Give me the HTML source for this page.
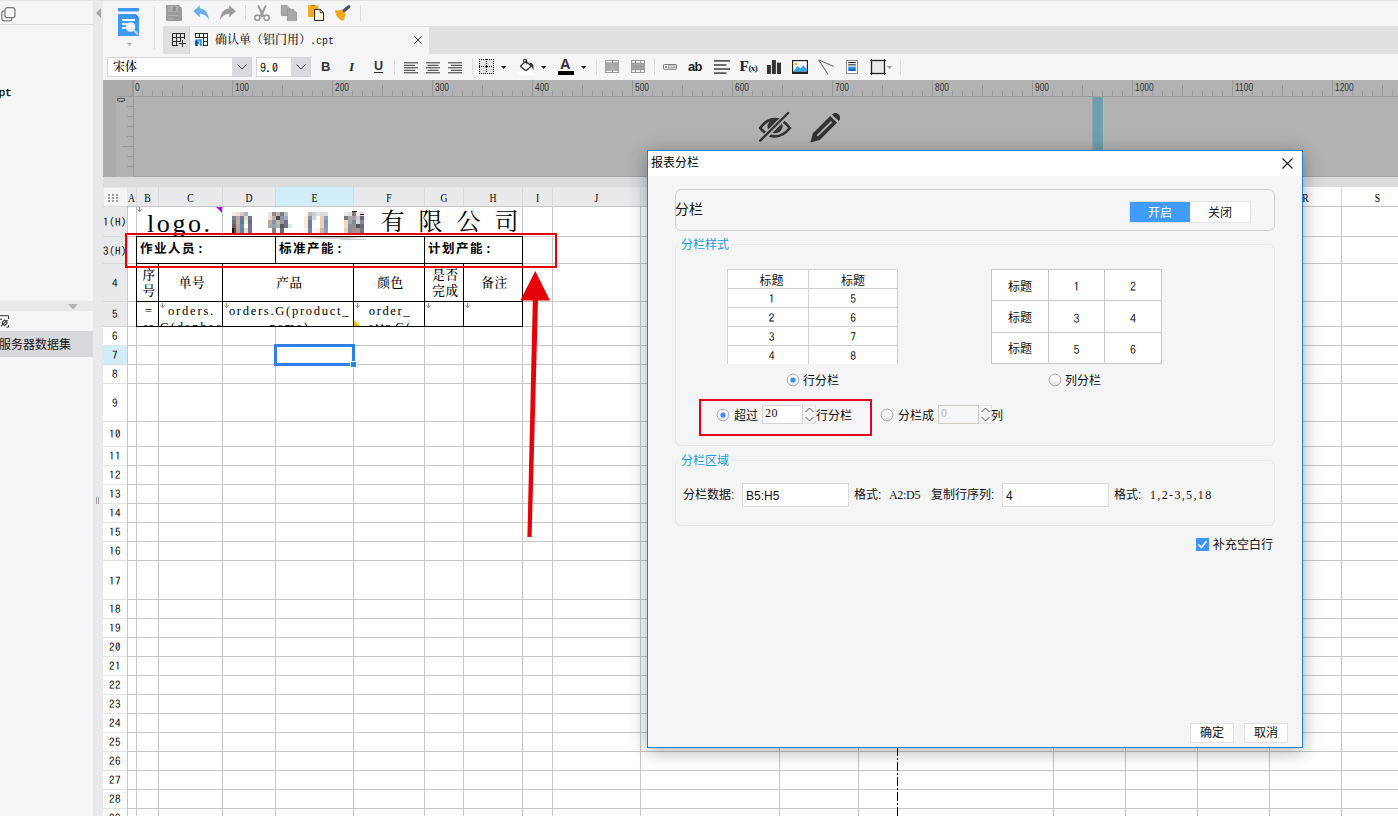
<!DOCTYPE html><html lang="zh"><head><meta charset="utf-8"><title>报表分栏</title><style>
*{box-sizing:border-box;margin:0;padding:0}
html,body{width:1398px;height:816px;overflow:hidden;background:#f5f5f7}
body{position:relative;font-family:"Liberation Sans","Noto Sans CJK SC",sans-serif;font-size:12px;color:#1a1a1a}
.a{position:absolute}
.ui{font-family:"Liberation Sans","Noto Sans CJK SC",sans-serif}
.song{font-family:"Liberation Mono","Noto Serif CJK SC",serif;font-weight:500}
.hl{position:absolute;height:1px;background:#c6c6c6}
.vl{position:absolute;width:1px;background:#c6c6c6}
.bl{position:absolute;background:#000}
.rh{position:absolute;left:103px;width:24px;text-align:center;font-family:"IPAGothic","Liberation Mono",monospace;font-size:11px;color:#000;letter-spacing:0.5px;white-space:nowrap}
.ch{position:absolute;top:187px;height:19px;line-height:22px;text-align:center;font-family:"Liberation Serif","Noto Serif CJK SC",serif;font-size:11.5px;color:#000;transform:scaleX(0.84)}
.cell{position:absolute;overflow:hidden;font-family:"Liberation Mono","Noto Serif CJK SC",serif;color:#000;text-align:center}
.sep{position:absolute;width:1px;background:#dcdcde}
.ns{font-family:"Liberation Serif","Noto Serif CJK SC",serif}
.ipa{font-family:"IPAGothic","Liberation Mono",monospace}
.lm{font-family:"Liberation Mono",monospace}
.ls{font-family:"Liberation Sans",sans-serif}
.lr{font-family:"Liberation Serif",serif}
svg{position:absolute;overflow:visible}
</style></head><body>
<div class="a" style="left:0;top:0;width:93px;height:816px;background:#f5f5f7"></div>
<div class="a" style="left:0;top:0;width:1398px;height:1px;background:#e4e4e6"></div>
<div class="a" style="left:0;top:24px;width:93px;height:1px;background:#d9d9db"></div>
<svg style="left:0;top:6px" width="17" height="17" viewBox="0 0 17 17"><rect x="1.8" y="4.8" width="10" height="10" rx="2.4" fill="#f5f5f7" stroke="#7c7c7c" stroke-width="1.3"/><rect x="4.9" y="1.7" width="10" height="10" rx="2.4" fill="#f5f5f7" stroke="#7c7c7c" stroke-width="1.3"/></svg>
<div class="a lm" style="left:-1.5px;top:85px;font-size:11.5px;line-height:16px;color:#000;letter-spacing:-0.5px;-webkit-text-stroke:0.25px #000">pt</div>
<div class="a" style="left:0;top:301px;width:93px;height:10px;background:#e9e9eb"></div>
<svg style="left:68px;top:304px" width="10" height="6"><path d="M0 0H10L5 5.5Z" fill="#b4b4b6"/></svg>
<svg style="left:0;top:315px" width="10" height="14" viewBox="0 0 10 14"><path d="M0 0.7H8.5V4M8.5 10V12.2H6.5M0 4.2H2" fill="none" stroke="#333" stroke-width="1"/><path d="M1 11.2L7.6 5.2" fill="none" stroke="#333" stroke-width="1.1"/><rect x="2.6" y="5.6" width="4.2" height="4.2" rx="1.3" transform="rotate(45 4.7 7.7)" fill="none" stroke="#333" stroke-width="1.1"/></svg>
<div class="a" style="left:0;top:331px;width:93px;height:26px;background:#d9d9dd"></div>
<div class="a ui" style="left:-1px;top:331px;height:26px;line-height:28px;font-size:12px;color:#111;white-space:nowrap">服务器数据集</div>
<div class="a" style="left:93px;top:1px;width:10px;height:815px;background:#e9e9eb"></div>
<svg style="left:96px;top:8px" width="6" height="11"><path d="M5 0V10L0 5Z" fill="#a6a6a8"/></svg>
<div class="a" style="left:96px;top:497px;width:1px;height:7px;background:#a0a0a0"></div><div class="a" style="left:98px;top:497px;width:1px;height:7px;background:#a0a0a0"></div>
<div class="a" style="left:163px;top:26px;width:1235px;height:28px;background:#e0e0e2"></div>
<div class="a" style="left:190px;top:27px;width:239px;height:27px;background:#f5f5f7"></div>
<div class="a" style="left:189px;top:27px;width:1px;height:27px;background:#d4d4d6"></div>
<div class="a song" style="left:215px;top:26px;height:28px;line-height:31px;font-size:12px;color:#222;white-space:nowrap"><span>确认单（铝门用）</span><span style="font-size:10px;font-family:'Liberation Mono',monospace;margin-left:-1px">.cpt</span></div>
<div class="sep" style="left:154px;top:7px;height:42px"></div>
<div class="sep" style="left:245px;top:5px;height:16px"></div>
<div class="sep" style="left:360px;top:5px;height:16px"></div>
<div class="sep" style="left:394px;top:59px;height:16px"></div>
<div class="sep" style="left:472px;top:59px;height:16px"></div>
<div class="sep" style="left:596px;top:59px;height:16px"></div>
<div class="sep" style="left:654px;top:59px;height:16px"></div>
<div class="sep" style="left:900px;top:59px;height:16px"></div>
<svg style="left:118px;top:8px" width="21" height="28" viewBox="0 0 21 28"><path d="M0 0H21V2.5Q21 3.6 19.8 3.6H1.2Q0 3.6 0 2.5Z" fill="#3f97f6"/><path d="M1 6H17.5L21 9.5V28H0V7Q0 6 1 6Z" fill="#3f97f6"/><path d="M17.5 6L21 9.5H17.5Z" fill="#2b7bd8"/><rect x="4" y="11" width="13" height="2" fill="#fff"/><rect x="4" y="15.2" width="5" height="1.8" fill="#fff"/><rect x="4" y="19" width="4" height="1.8" fill="#fff"/><circle cx="12.5" cy="19" r="4.3" fill="#e4f1fd" stroke="#f4f4f4" stroke-width="1.1"/><rect x="8.8" y="17.3" width="7.4" height="1.6" fill="#fff" opacity="0.9"/><path d="M15.8 22.3L19.6 26" stroke="#e8e8e8" stroke-width="1.8" stroke-linecap="round"/><path d="M16.6 23.1L19.6 26" stroke="#9aa0a8" stroke-width="0.8" stroke-linecap="round"/></svg>
<svg style="left:126.5px;top:43px" width="5" height="3" viewBox="0 0 5 3"><path d="M0 0H5L2.5 3Z" fill="#a8a8a8"/></svg>
<svg style="left:166px;top:5px" width="16" height="16" viewBox="0 0 16 16"><path d="M1 0H12.8L16 3.2V15Q16 16 15 16H1Q0 16 0 15V1Q0 0 1 0Z" fill="#9b9b9b"/><rect x="2" y="1" width="10" height="6" fill="#adadad"/><rect x="7" y="1.8" width="2.8" height="4.2" fill="#8e8e8e"/><rect x="2" y="10" width="9.6" height="1" fill="#b2b2b2"/><rect x="2" y="13.2" width="6.8" height="1" fill="#b2b2b2"/></svg>
<svg style="left:193px;top:5px" width="16" height="16" viewBox="0 0 16 16"><path d="M0.2 6.2L6.8 0.2V3.4C12 3.6 15.6 7.4 16 15.2C13.4 10.6 11 9 6.8 8.8V12.2Z" fill="#6eb0ef"/></svg>
<svg style="left:220px;top:5px" width="16" height="16" viewBox="0 0 16 16"><path d="M15.8 6.2L9.2 0.2V3.4C4 3.6 0.4 7.4 0 15.2C2.6 10.6 5 9 9.2 8.8V12.2Z" fill="#9c9c9c"/></svg>
<svg style="left:254px;top:5px" width="16" height="16" viewBox="0 0 16 16"><path d="M3.2 0.2C4.6 0 5.4 0.6 5.8 1.6L10.2 10.8L8.2 12.4Z" fill="#9a9a9a"/><path d="M12.8 0.2C11.4 0 10.6 0.6 10.2 1.6L5.8 10.8L7.8 12.4Z" fill="#9a9a9a"/><circle cx="3.4" cy="12.7" r="2.6" fill="none" stroke="#9a9a9a" stroke-width="1.6"/><circle cx="12.6" cy="12.7" r="2.6" fill="none" stroke="#9a9a9a" stroke-width="1.6"/></svg>
<svg style="left:281px;top:5px" width="16" height="16" viewBox="0 0 16 16"><path d="M0.4 0.4H5.8L8.8 3.4V10.6H0.4Z" fill="#a8a8a8" stroke="#929292" stroke-width="0.8"/><path d="M5.8 0.4V3.4H8.8" fill="#bdbdbd" stroke="#929292" stroke-width="0.6"/><path d="M6.4 4.4H12.4L15.6 7.6V15.6H6.4Z" fill="#a8a8a8" stroke="#929292" stroke-width="0.8"/><path d="M12.4 4.4V7.6H15.6" fill="#bdbdbd" stroke="#929292" stroke-width="0.6"/></svg>
<svg style="left:308px;top:5px" width="16" height="16" viewBox="0 0 16 16"><rect x="0" y="0.3" width="10" height="11.7" fill="#f2aa1c"/><rect x="3" y="0" width="4" height="1" fill="#c4562c"/><path d="M6.6 4.4H12.4L15.5 7.5V15.5H6.6Z" fill="#fff3dd" stroke="#222" stroke-width="1"/><path d="M12.2 4.6V7.7H15.3" fill="none" stroke="#222" stroke-width="0.9"/></svg>
<svg style="left:335px;top:5px" width="16" height="16" viewBox="0 0 16 16"><path d="M0 5.2C3.6 5.6 6.6 5.2 8 4.6L10.6 8.8C10.2 11.4 9.6 14 8.2 15.8C3.6 15 0.6 10.6 0 5.2Z" fill="#f2aa1c"/><path d="M8.3 5L10.4 8.2" stroke="#e8e8ea" stroke-width="1" fill="none"/><path d="M9.2 5.6L13.8 1.8" stroke="#4c5262" stroke-width="3.2" stroke-linecap="round"/></svg>
<svg style="left:172px;top:33px" width="14" height="14" viewBox="0 0 14 14"><path d="M0 0.5H13 M0 4.5H13 M0 8.5H8 M0 12.5H6 M0.5 0V13 M4.5 0V13 M8.5 0V8.5 M12.5 0V5.5" fill="none" stroke="#2a2a2a" stroke-width="1" shape-rendering="crispEdges"/><path d="M7 10.5H14 M10.5 7.4V13.8" fill="none" stroke="#2a2a2a" stroke-width="1" shape-rendering="crispEdges"/></svg>
<svg style="left:195px;top:33px" width="13" height="14" viewBox="0 0 13 14"><path d="M0 0.5H13 M0 4.5H13 M8 8.5H13 M8 12.5H13 M0.5 0V5 M4.5 0V5 M8.5 0V13 M12.5 0V13" fill="none" stroke="#2a2a2a" stroke-width="1" shape-rendering="crispEdges"/><path d="M0.6 6.4H2.6V8.8H4.2V10.6H2.6V13H0.2C0 10.6 0 8.6 0.6 6.4Z" fill="#0c4fa6"/><path d="M3.2 6.2H6.8V13H4.8V8.2H3.2Z" fill="#22a0e2"/></svg>
<svg style="left:414px;top:36px" width="8" height="8" viewBox="0 0 8 8"><path d="M0.3 0.3L7.7 7.7M7.7 0.3L0.3 7.7" stroke="#333" stroke-width="1" fill="none"/></svg>
<div class="a" style="left:321px;top:57px;height:20px;line-height:20px;font:bold 13px/20px 'Liberation Sans',sans-serif;color:#333">B</div>
<div class="a" style="left:349px;top:57px;height:20px;font:italic bold 13.5px/20px 'Liberation Serif',serif;color:#333">I</div>
<div class="a" style="left:374px;top:57px;height:20px;font:bold 12.5px/19px 'Liberation Sans',sans-serif;color:#333">U</div>
<div class="a" style="left:374px;top:71.5px;width:9px;height:1px;background:#333"></div>
<svg style="left:404px;top:61.7px" width="14" height="12" viewBox="0 0 14 12"><rect x="0" y="0.3" width="14" height="1" fill="#333"/><rect x="0" y="2.8" width="11" height="1" fill="#333"/><rect x="0" y="5.3" width="14" height="1" fill="#333"/><rect x="0" y="7.8" width="11" height="1" fill="#333"/><rect x="0" y="10.3" width="14" height="1" fill="#333"/></svg>
<svg style="left:426px;top:61.7px" width="14" height="12" viewBox="0 0 14 12"><rect x="0" y="0.3" width="14" height="1" fill="#333"/><rect x="1.5" y="2.8" width="11" height="1" fill="#333"/><rect x="0" y="5.3" width="14" height="1" fill="#333"/><rect x="1.5" y="7.8" width="11" height="1" fill="#333"/><rect x="0" y="10.3" width="14" height="1" fill="#333"/></svg>
<svg style="left:448px;top:61.7px" width="14" height="12" viewBox="0 0 14 12"><rect x="0" y="0.3" width="14" height="1" fill="#333"/><rect x="3" y="2.8" width="11" height="1" fill="#333"/><rect x="0" y="5.3" width="14" height="1" fill="#333"/><rect x="3" y="7.8" width="11" height="1" fill="#333"/><rect x="0" y="10.3" width="14" height="1" fill="#333"/></svg>
<svg style="left:479px;top:59px" width="15" height="15" viewBox="0 0 15 15"><rect x="0" y="0" width="15" height="15" fill="#e3e3e5"/><g fill="#111" shape-rendering="crispEdges"><rect x="0" y="0" width="1" height="1"/><rect x="0" y="14" width="1" height="1"/><rect x="0" y="0" width="1" height="1"/><rect x="14" y="0" width="1" height="1"/><rect x="2" y="0" width="1" height="1"/><rect x="2" y="14" width="1" height="1"/><rect x="0" y="2" width="1" height="1"/><rect x="14" y="2" width="1" height="1"/><rect x="2" y="7" width="1" height="1"/><rect x="7" y="2" width="1" height="1"/><rect x="4" y="0" width="1" height="1"/><rect x="4" y="14" width="1" height="1"/><rect x="0" y="4" width="1" height="1"/><rect x="14" y="4" width="1" height="1"/><rect x="4" y="7" width="1" height="1"/><rect x="7" y="4" width="1" height="1"/><rect x="6" y="0" width="1" height="1"/><rect x="6" y="14" width="1" height="1"/><rect x="0" y="6" width="1" height="1"/><rect x="14" y="6" width="1" height="1"/><rect x="6" y="7" width="1" height="1"/><rect x="7" y="6" width="1" height="1"/><rect x="8" y="0" width="1" height="1"/><rect x="8" y="14" width="1" height="1"/><rect x="0" y="8" width="1" height="1"/><rect x="14" y="8" width="1" height="1"/><rect x="8" y="7" width="1" height="1"/><rect x="7" y="8" width="1" height="1"/><rect x="10" y="0" width="1" height="1"/><rect x="10" y="14" width="1" height="1"/><rect x="0" y="10" width="1" height="1"/><rect x="14" y="10" width="1" height="1"/><rect x="10" y="7" width="1" height="1"/><rect x="7" y="10" width="1" height="1"/><rect x="12" y="0" width="1" height="1"/><rect x="12" y="14" width="1" height="1"/><rect x="0" y="12" width="1" height="1"/><rect x="14" y="12" width="1" height="1"/><rect x="12" y="7" width="1" height="1"/><rect x="7" y="12" width="1" height="1"/><rect x="14" y="0" width="1" height="1"/><rect x="14" y="14" width="1" height="1"/><rect x="0" y="14" width="1" height="1"/><rect x="14" y="14" width="1" height="1"/><rect x="6" y="7" width="3" height="1"/><rect x="7" y="6" width="1" height="3"/><rect x="0" y="6" width="1" height="3"/><rect x="6" y="0" width="3" height="1"/></g></svg>
<svg style="left:500.7px;top:66px" width="5.4" height="3" viewBox="0 0 5.4 3"><path d="M0 0H5.4L2.7 3Z" fill="#222"/></svg>
<svg style="left:540.7px;top:66px" width="5.4" height="3" viewBox="0 0 5.4 3"><path d="M0 0H5.4L2.7 3Z" fill="#222"/></svg>
<svg style="left:580.7px;top:66px" width="5.4" height="3" viewBox="0 0 5.4 3"><path d="M0 0H5.4L2.7 3Z" fill="#222"/></svg>
<svg style="left:519px;top:58px" width="16" height="14" viewBox="0 0 16 14"><path d="M4.6 1.4H7.6V6" fill="none" stroke="#333" stroke-width="1"/><path d="M4.6 1.4V4" fill="none" stroke="#333" stroke-width="1"/><path d="M6.6 3.2L12.4 8L7 12.8L1.4 8.2Z" fill="#f5f5f7" stroke="#333" stroke-width="1.2" stroke-linejoin="round"/><path d="M7.6 3.4V6.4" fill="none" stroke="#333" stroke-width="1"/><path d="M10.2 4.4C13.4 4.6 15.4 7 14.2 12.4C13.6 9.8 12.8 8.6 11.8 8.2Z" fill="#333"/></svg>
<div class="a" style="left:518px;top:71px;width:16px;height:4px;background:#fff"></div>
<div class="a" style="left:560px;top:55px;font:bold 14.5px/18px 'Liberation Sans',sans-serif;color:#333">A</div>
<div class="a" style="left:558px;top:71px;width:16px;height:4px;background:#000"></div>
<svg style="left:605px;top:60px" width="14" height="13" viewBox="0 0 14 13"><rect x="0" y="0" width="14" height="13" fill="#9a9a9a"/><rect x="1" y="3" width="12" height="7" fill="#a8a8a8"/><rect x="1" y="1" width="6" height="1.3" fill="#f3f3f5"/><rect x="8" y="1" width="5" height="1.3" fill="#f3f3f5"/><rect x="1" y="10.7" width="6" height="1.3" fill="#f3f3f5"/><rect x="8" y="10.7" width="5" height="1.3" fill="#f3f3f5"/><text x="7" y="8.8" font-family="Liberation Sans,sans-serif" font-size="6.5" fill="#bdbdbd" text-anchor="middle">a</text></svg>
<svg style="left:631px;top:60px" width="14" height="13" viewBox="0 0 14 13"><rect x="0" y="0" width="14" height="13" fill="#9a9a9a"/><rect x="1" y="1" width="3" height="1.8" fill="#f3f3f5"/><rect x="5" y="1" width="4" height="1.8" fill="#f3f3f5"/><rect x="10" y="1" width="3" height="1.8" fill="#f3f3f5"/><rect x="1" y="3.8" width="3" height="2.3" fill="#a6a6a6"/><rect x="5" y="3.8" width="4" height="2.3" fill="#a6a6a6"/><rect x="10" y="3.8" width="3" height="2.3" fill="#a6a6a6"/><rect x="1" y="7" width="3" height="2.3" fill="#a6a6a6"/><rect x="5" y="7" width="4" height="2.3" fill="#a6a6a6"/><rect x="10" y="7" width="3" height="2.3" fill="#a6a6a6"/><rect x="1" y="10.2" width="3" height="1.8" fill="#f3f3f5"/><rect x="5" y="10.2" width="4" height="1.8" fill="#f3f3f5"/><rect x="10" y="10.2" width="3" height="1.8" fill="#f3f3f5"/></svg>
<svg style="left:663px;top:64px" width="14" height="6" viewBox="0 0 14 6"><rect x="0.5" y="0.5" width="13" height="4.8" rx="0.6" fill="#f5f5f7" stroke="#808080" stroke-width="1"/><rect x="2.1" y="2" width="1.8" height="1.8" fill="#808080"/><rect x="5.4" y="1.9" width="6.6" height="2" fill="#eee" stroke="#808080" stroke-width="0.7"/></svg>
<div class="a" style="left:688px;top:57px;font:bold 13px/20px 'Liberation Sans',sans-serif;color:#1c1c1c;letter-spacing:-0.7px">ab</div>
<svg style="left:714px;top:60px" width="16" height="14" viewBox="0 0 16 14"><rect x="0" y="0.2" width="16" height="1.4" fill="#333"/><rect x="0" y="4.3" width="12.4" height="1.4" fill="#333"/><rect x="0" y="8.3" width="16" height="1.4" fill="#333"/><rect x="0" y="12.4" width="12.4" height="1.4" fill="#333"/></svg>
<div class="a lr" style="left:739.5px;top:56px;font-weight:bold;font-size:15.5px;line-height:20px;color:#222;white-space:nowrap">F<span style="font-size:9px;font-weight:bold;letter-spacing:-0.5px;position:relative;top:-0.3px;left:-0.6px">(x)</span></div>
<svg style="left:767px;top:60px" width="14" height="14" viewBox="0 0 14 14"><rect x="0" y="5" width="3.9" height="9" fill="#333"/><rect x="4.9" y="0" width="4" height="14" fill="#333"/><rect x="9.9" y="2.6" width="4.1" height="11.4" fill="#333"/></svg>
<svg style="left:792px;top:60px" width="16" height="14" viewBox="0 0 16 14"><rect x="0.6" y="0.6" width="14.8" height="12.8" fill="#fff" stroke="#222" stroke-width="1.2"/><rect x="0" y="11.4" width="16" height="2.6" fill="#222"/><path d="M1.2 11.4L5.6 5.8L8.4 8.6L11.2 5.2L14.8 9V11.4Z" fill="#35a7ea"/><circle cx="3.8" cy="3.8" r="1.4" fill="#f7b52c"/></svg>
<svg style="left:818px;top:59px" width="16" height="16" viewBox="0 0 16 16"><path d="M0.5 0.8L15.8 7.6M0.5 0.8L10 15.4" stroke="#777" stroke-width="1.1" fill="none"/></svg>
<svg style="left:846px;top:60px" width="12" height="14" viewBox="0 0 12 14"><rect x="0.5" y="0.5" width="11" height="13" fill="#fff" stroke="#8a8a8a" stroke-width="1"/><rect x="2.2" y="2" width="7.6" height="1.1" fill="#222"/><rect x="2.2" y="4.3" width="7.6" height="1.1" fill="#222"/><rect x="2.2" y="6.6" width="7.6" height="4.4" fill="#2f8fe6"/><path d="M2.4 11L5 8.4L6.6 9.8L8 8.6L9.6 10V11Z" fill="#1b5fb8"/></svg>
<svg style="left:870px;top:59px" width="16" height="16" viewBox="0 0 16 16"><rect x="1.5" y="1.5" width="13" height="13" fill="#e9e9eb" stroke="#222" stroke-width="1.3"/><path d="M0 1.5H16M0 14.5H16M1.5 0V16M14.5 0V16" stroke="#222" stroke-width="1" fill="none"/></svg>
<svg style="left:887px;top:65.5px" width="5" height="3" viewBox="0 0 5 3"><path d="M0 0H5L2.5 3Z" fill="#999"/></svg>
<div class="a" style="left:107px;top:57px;width:145px;height:20px;background:#fff;border:1px solid #d4d4d6"></div>
<div class="a" style="left:232px;top:58px;width:19px;height:18px;background:#d9d9dd"></div>
<svg style="left:237px;top:64px" width="10" height="6"><path d="M0.5 0.5L5 5L9.5 0.5" fill="none" stroke="#444" stroke-width="1"/></svg>
<div class="a song" style="left:113px;top:57px;height:20px;line-height:23px;font-size:12px;color:#000">宋体</div>
<div class="a" style="left:256px;top:57px;width:55px;height:20px;background:#fff;border:1px solid #d4d4d6"></div>
<div class="a" style="left:291px;top:58px;width:19px;height:18px;background:#d9d9dd"></div>
<svg style="left:296px;top:64px" width="10" height="6"><path d="M0.5 0.5L5 5L9.5 0.5" fill="none" stroke="#444" stroke-width="1"/></svg>
<div class="a ipa" style="left:260px;top:57px;height:20px;line-height:20px;font-size:12px;color:#000;letter-spacing:0">9.0</div>
<div class="a" style="left:103px;top:80px;width:1295px;height:97px;background:#b2b2b2"></div>
<div class="a" style="left:103px;top:80px;width:30px;height:16px;background:#ababab"></div>
<div class="a" style="left:103px;top:96px;width:13px;height:81px;background:#ababab"></div>
<div class="a" style="left:116px;top:96px;width:1282px;height:1px;background:#9c9c9c"></div>
<div class="a" style="left:133px;top:80px;width:1px;height:97px;background:#9c9c9c"></div>
<div class="a" style="left:132px;top:80px;width:1px;height:16px;background:#9a9a9a"></div><div class="a" style="left:142px;top:91px;width:1px;height:5px;background:#9a9a9a"></div><div class="a" style="left:152px;top:91px;width:1px;height:5px;background:#9a9a9a"></div><div class="a" style="left:162px;top:91px;width:1px;height:5px;background:#9a9a9a"></div><div class="a" style="left:172px;top:91px;width:1px;height:5px;background:#9a9a9a"></div><div class="a" style="left:182px;top:85px;width:1px;height:11px;background:#9a9a9a"></div><div class="a" style="left:192px;top:91px;width:1px;height:5px;background:#9a9a9a"></div><div class="a" style="left:202px;top:91px;width:1px;height:5px;background:#9a9a9a"></div><div class="a" style="left:212px;top:91px;width:1px;height:5px;background:#9a9a9a"></div><div class="a" style="left:222px;top:91px;width:1px;height:5px;background:#9a9a9a"></div><div class="a" style="left:232px;top:80px;width:1px;height:16px;background:#9a9a9a"></div><div class="a" style="left:242px;top:91px;width:1px;height:5px;background:#9a9a9a"></div><div class="a" style="left:252px;top:91px;width:1px;height:5px;background:#9a9a9a"></div><div class="a" style="left:262px;top:91px;width:1px;height:5px;background:#9a9a9a"></div><div class="a" style="left:272px;top:91px;width:1px;height:5px;background:#9a9a9a"></div><div class="a" style="left:282px;top:85px;width:1px;height:11px;background:#9a9a9a"></div><div class="a" style="left:292px;top:91px;width:1px;height:5px;background:#9a9a9a"></div><div class="a" style="left:302px;top:91px;width:1px;height:5px;background:#9a9a9a"></div><div class="a" style="left:312px;top:91px;width:1px;height:5px;background:#9a9a9a"></div><div class="a" style="left:322px;top:91px;width:1px;height:5px;background:#9a9a9a"></div><div class="a" style="left:332px;top:80px;width:1px;height:16px;background:#9a9a9a"></div><div class="a" style="left:342px;top:91px;width:1px;height:5px;background:#9a9a9a"></div><div class="a" style="left:352px;top:91px;width:1px;height:5px;background:#9a9a9a"></div><div class="a" style="left:362px;top:91px;width:1px;height:5px;background:#9a9a9a"></div><div class="a" style="left:372px;top:91px;width:1px;height:5px;background:#9a9a9a"></div><div class="a" style="left:382px;top:85px;width:1px;height:11px;background:#9a9a9a"></div><div class="a" style="left:392px;top:91px;width:1px;height:5px;background:#9a9a9a"></div><div class="a" style="left:402px;top:91px;width:1px;height:5px;background:#9a9a9a"></div><div class="a" style="left:412px;top:91px;width:1px;height:5px;background:#9a9a9a"></div><div class="a" style="left:422px;top:91px;width:1px;height:5px;background:#9a9a9a"></div><div class="a" style="left:432px;top:80px;width:1px;height:16px;background:#9a9a9a"></div><div class="a" style="left:442px;top:91px;width:1px;height:5px;background:#9a9a9a"></div><div class="a" style="left:452px;top:91px;width:1px;height:5px;background:#9a9a9a"></div><div class="a" style="left:462px;top:91px;width:1px;height:5px;background:#9a9a9a"></div><div class="a" style="left:472px;top:91px;width:1px;height:5px;background:#9a9a9a"></div><div class="a" style="left:482px;top:85px;width:1px;height:11px;background:#9a9a9a"></div><div class="a" style="left:492px;top:91px;width:1px;height:5px;background:#9a9a9a"></div><div class="a" style="left:502px;top:91px;width:1px;height:5px;background:#9a9a9a"></div><div class="a" style="left:512px;top:91px;width:1px;height:5px;background:#9a9a9a"></div><div class="a" style="left:522px;top:91px;width:1px;height:5px;background:#9a9a9a"></div><div class="a" style="left:532px;top:80px;width:1px;height:16px;background:#9a9a9a"></div><div class="a" style="left:542px;top:91px;width:1px;height:5px;background:#9a9a9a"></div><div class="a" style="left:552px;top:91px;width:1px;height:5px;background:#9a9a9a"></div><div class="a" style="left:562px;top:91px;width:1px;height:5px;background:#9a9a9a"></div><div class="a" style="left:572px;top:91px;width:1px;height:5px;background:#9a9a9a"></div><div class="a" style="left:582px;top:85px;width:1px;height:11px;background:#9a9a9a"></div><div class="a" style="left:592px;top:91px;width:1px;height:5px;background:#9a9a9a"></div><div class="a" style="left:602px;top:91px;width:1px;height:5px;background:#9a9a9a"></div><div class="a" style="left:612px;top:91px;width:1px;height:5px;background:#9a9a9a"></div><div class="a" style="left:622px;top:91px;width:1px;height:5px;background:#9a9a9a"></div><div class="a" style="left:632px;top:80px;width:1px;height:16px;background:#9a9a9a"></div><div class="a" style="left:642px;top:91px;width:1px;height:5px;background:#9a9a9a"></div><div class="a" style="left:652px;top:91px;width:1px;height:5px;background:#9a9a9a"></div><div class="a" style="left:662px;top:91px;width:1px;height:5px;background:#9a9a9a"></div><div class="a" style="left:672px;top:91px;width:1px;height:5px;background:#9a9a9a"></div><div class="a" style="left:682px;top:85px;width:1px;height:11px;background:#9a9a9a"></div><div class="a" style="left:692px;top:91px;width:1px;height:5px;background:#9a9a9a"></div><div class="a" style="left:702px;top:91px;width:1px;height:5px;background:#9a9a9a"></div><div class="a" style="left:712px;top:91px;width:1px;height:5px;background:#9a9a9a"></div><div class="a" style="left:722px;top:91px;width:1px;height:5px;background:#9a9a9a"></div><div class="a" style="left:732px;top:80px;width:1px;height:16px;background:#9a9a9a"></div><div class="a" style="left:742px;top:91px;width:1px;height:5px;background:#9a9a9a"></div><div class="a" style="left:752px;top:91px;width:1px;height:5px;background:#9a9a9a"></div><div class="a" style="left:762px;top:91px;width:1px;height:5px;background:#9a9a9a"></div><div class="a" style="left:772px;top:91px;width:1px;height:5px;background:#9a9a9a"></div><div class="a" style="left:782px;top:85px;width:1px;height:11px;background:#9a9a9a"></div><div class="a" style="left:792px;top:91px;width:1px;height:5px;background:#9a9a9a"></div><div class="a" style="left:802px;top:91px;width:1px;height:5px;background:#9a9a9a"></div><div class="a" style="left:812px;top:91px;width:1px;height:5px;background:#9a9a9a"></div><div class="a" style="left:822px;top:91px;width:1px;height:5px;background:#9a9a9a"></div><div class="a" style="left:832px;top:80px;width:1px;height:16px;background:#9a9a9a"></div><div class="a" style="left:842px;top:91px;width:1px;height:5px;background:#9a9a9a"></div><div class="a" style="left:852px;top:91px;width:1px;height:5px;background:#9a9a9a"></div><div class="a" style="left:862px;top:91px;width:1px;height:5px;background:#9a9a9a"></div><div class="a" style="left:872px;top:91px;width:1px;height:5px;background:#9a9a9a"></div><div class="a" style="left:882px;top:85px;width:1px;height:11px;background:#9a9a9a"></div><div class="a" style="left:892px;top:91px;width:1px;height:5px;background:#9a9a9a"></div><div class="a" style="left:902px;top:91px;width:1px;height:5px;background:#9a9a9a"></div><div class="a" style="left:912px;top:91px;width:1px;height:5px;background:#9a9a9a"></div><div class="a" style="left:922px;top:91px;width:1px;height:5px;background:#9a9a9a"></div><div class="a" style="left:932px;top:80px;width:1px;height:16px;background:#9a9a9a"></div><div class="a" style="left:942px;top:91px;width:1px;height:5px;background:#9a9a9a"></div><div class="a" style="left:952px;top:91px;width:1px;height:5px;background:#9a9a9a"></div><div class="a" style="left:962px;top:91px;width:1px;height:5px;background:#9a9a9a"></div><div class="a" style="left:972px;top:91px;width:1px;height:5px;background:#9a9a9a"></div><div class="a" style="left:982px;top:85px;width:1px;height:11px;background:#9a9a9a"></div><div class="a" style="left:992px;top:91px;width:1px;height:5px;background:#9a9a9a"></div><div class="a" style="left:1002px;top:91px;width:1px;height:5px;background:#9a9a9a"></div><div class="a" style="left:1012px;top:91px;width:1px;height:5px;background:#9a9a9a"></div><div class="a" style="left:1022px;top:91px;width:1px;height:5px;background:#9a9a9a"></div><div class="a" style="left:1032px;top:80px;width:1px;height:16px;background:#9a9a9a"></div><div class="a" style="left:1042px;top:91px;width:1px;height:5px;background:#9a9a9a"></div><div class="a" style="left:1052px;top:91px;width:1px;height:5px;background:#9a9a9a"></div><div class="a" style="left:1062px;top:91px;width:1px;height:5px;background:#9a9a9a"></div><div class="a" style="left:1072px;top:91px;width:1px;height:5px;background:#9a9a9a"></div><div class="a" style="left:1082px;top:85px;width:1px;height:11px;background:#9a9a9a"></div><div class="a" style="left:1092px;top:91px;width:1px;height:5px;background:#9a9a9a"></div><div class="a" style="left:1102px;top:91px;width:1px;height:5px;background:#9a9a9a"></div><div class="a" style="left:1112px;top:91px;width:1px;height:5px;background:#9a9a9a"></div><div class="a" style="left:1122px;top:91px;width:1px;height:5px;background:#9a9a9a"></div><div class="a" style="left:1132px;top:80px;width:1px;height:16px;background:#9a9a9a"></div><div class="a" style="left:1142px;top:91px;width:1px;height:5px;background:#9a9a9a"></div><div class="a" style="left:1152px;top:91px;width:1px;height:5px;background:#9a9a9a"></div><div class="a" style="left:1162px;top:91px;width:1px;height:5px;background:#9a9a9a"></div><div class="a" style="left:1172px;top:91px;width:1px;height:5px;background:#9a9a9a"></div><div class="a" style="left:1182px;top:85px;width:1px;height:11px;background:#9a9a9a"></div><div class="a" style="left:1192px;top:91px;width:1px;height:5px;background:#9a9a9a"></div><div class="a" style="left:1202px;top:91px;width:1px;height:5px;background:#9a9a9a"></div><div class="a" style="left:1212px;top:91px;width:1px;height:5px;background:#9a9a9a"></div><div class="a" style="left:1222px;top:91px;width:1px;height:5px;background:#9a9a9a"></div><div class="a" style="left:1232px;top:80px;width:1px;height:16px;background:#9a9a9a"></div><div class="a" style="left:1242px;top:91px;width:1px;height:5px;background:#9a9a9a"></div><div class="a" style="left:1252px;top:91px;width:1px;height:5px;background:#9a9a9a"></div><div class="a" style="left:1262px;top:91px;width:1px;height:5px;background:#9a9a9a"></div><div class="a" style="left:1272px;top:91px;width:1px;height:5px;background:#9a9a9a"></div><div class="a" style="left:1282px;top:85px;width:1px;height:11px;background:#9a9a9a"></div><div class="a" style="left:1292px;top:91px;width:1px;height:5px;background:#9a9a9a"></div><div class="a" style="left:1302px;top:91px;width:1px;height:5px;background:#9a9a9a"></div><div class="a" style="left:1312px;top:91px;width:1px;height:5px;background:#9a9a9a"></div><div class="a" style="left:1322px;top:91px;width:1px;height:5px;background:#9a9a9a"></div><div class="a" style="left:1332px;top:80px;width:1px;height:16px;background:#9a9a9a"></div><div class="a" style="left:1342px;top:91px;width:1px;height:5px;background:#9a9a9a"></div><div class="a" style="left:1352px;top:91px;width:1px;height:5px;background:#9a9a9a"></div><div class="a" style="left:1362px;top:91px;width:1px;height:5px;background:#9a9a9a"></div><div class="a" style="left:1372px;top:91px;width:1px;height:5px;background:#9a9a9a"></div><div class="a" style="left:1382px;top:85px;width:1px;height:11px;background:#9a9a9a"></div><div class="a" style="left:1392px;top:91px;width:1px;height:5px;background:#9a9a9a"></div>
<div class="a ui" style="left:134.6px;top:81.5px;font-size:10px;line-height:11px;color:#333;transform:scaleX(0.84);transform-origin:0 0;white-space:nowrap">0</div>
<div class="a ui" style="left:234.6px;top:81.5px;font-size:10px;line-height:11px;color:#333;transform:scaleX(0.84);transform-origin:0 0;white-space:nowrap">100</div>
<div class="a ui" style="left:334.6px;top:81.5px;font-size:10px;line-height:11px;color:#333;transform:scaleX(0.84);transform-origin:0 0;white-space:nowrap">200</div>
<div class="a ui" style="left:434.6px;top:81.5px;font-size:10px;line-height:11px;color:#333;transform:scaleX(0.84);transform-origin:0 0;white-space:nowrap">300</div>
<div class="a ui" style="left:534.6px;top:81.5px;font-size:10px;line-height:11px;color:#333;transform:scaleX(0.84);transform-origin:0 0;white-space:nowrap">400</div>
<div class="a ui" style="left:634.6px;top:81.5px;font-size:10px;line-height:11px;color:#333;transform:scaleX(0.84);transform-origin:0 0;white-space:nowrap">500</div>
<div class="a ui" style="left:734.6px;top:81.5px;font-size:10px;line-height:11px;color:#333;transform:scaleX(0.84);transform-origin:0 0;white-space:nowrap">600</div>
<div class="a ui" style="left:834.6px;top:81.5px;font-size:10px;line-height:11px;color:#333;transform:scaleX(0.84);transform-origin:0 0;white-space:nowrap">700</div>
<div class="a ui" style="left:934.6px;top:81.5px;font-size:10px;line-height:11px;color:#333;transform:scaleX(0.84);transform-origin:0 0;white-space:nowrap">800</div>
<div class="a ui" style="left:1034.6px;top:81.5px;font-size:10px;line-height:11px;color:#333;transform:scaleX(0.84);transform-origin:0 0;white-space:nowrap">900</div>
<div class="a ui" style="left:1134.6px;top:81.5px;font-size:10px;line-height:11px;color:#333;transform:scaleX(0.84);transform-origin:0 0;white-space:nowrap">1000</div>
<div class="a ui" style="left:1234.6px;top:81.5px;font-size:10px;line-height:11px;color:#333;transform:scaleX(0.84);transform-origin:0 0;white-space:nowrap">1100</div>
<div class="a ui" style="left:1334.6px;top:81.5px;font-size:10px;line-height:11px;color:#333;transform:scaleX(0.84);transform-origin:0 0;white-space:nowrap">1200</div>
<div class="a" style="left:127px;top:106px;width:6px;height:1px;background:#9a9a9a"></div><div class="a" style="left:127px;top:116px;width:6px;height:1px;background:#9a9a9a"></div><div class="a" style="left:127px;top:126px;width:6px;height:1px;background:#9a9a9a"></div><div class="a" style="left:127px;top:136px;width:6px;height:1px;background:#9a9a9a"></div><div class="a" style="left:122px;top:146px;width:11px;height:1px;background:#9a9a9a"></div><div class="a" style="left:127px;top:156px;width:6px;height:1px;background:#9a9a9a"></div><div class="a" style="left:127px;top:166px;width:6px;height:1px;background:#9a9a9a"></div>
<div class="a ui" style="left:116px;top:92px;width:11px;font-size:10px;line-height:11px;color:#333;transform:rotate(-90deg) scaleX(0.84)">0</div>
<div class="a" style="left:1092px;top:97px;width:12px;height:80px;background:#6f9fae;border-left:1px solid #a0a0a0;border-right:1px solid #bdb6b6"></div>
<div class="a" style="left:134px;top:176px;width:1264px;height:1px;background:#a2a2a2"></div>
<svg style="left:759px;top:112px" width="32" height="30" viewBox="0 0 32 30"><path d="M1.2 16C6 9.6 11.5 7.2 16 7.2C20.5 7.2 26 9.6 30.8 16C26 22 20.5 24.4 16 24.4C11.5 24.4 6 22 1.2 16Z" fill="none" stroke="#333" stroke-width="2.7"/><path d="M8.4 13.6C10 9 13 7.4 16 7.4C19 7.4 22.6 9 23.6 13.6C23.6 18.4 20.4 21.2 16 21.2C11.6 21.2 8.4 18.4 8.4 13.6Z" fill="#333"/><path d="M1 29.4L30 0.6" stroke="#b2b2b2" stroke-width="5.4" fill="none"/><path d="M1.2 28.6L29.2 1" stroke="#333" stroke-width="2.3" stroke-linecap="round" fill="none"/></svg>
<svg style="left:809.6px;top:111.6px" width="31" height="31" viewBox="0 0 30 30"><path d="M0.4 29.4L2.8 20.6L19.6 3.8L26.2 10.4L9.4 27.2Z" fill="#333"/><path d="M21.2 2.4C22.8 0.6 25.6 0.2 27.6 2.2C29.8 4.4 29.4 7.2 27.8 8.8Z" fill="#333"/><path d="M6.4 22.6L20.4 8.6L21.6 9.8L7.6 23.8Z" fill="#b2b2b2"/></svg>
<div class="a" style="left:103px;top:177px;width:1295px;height:10px;background:#dcdcde"></div>
<div class="a" style="left:103px;top:187px;width:1295px;height:629px;background:#fff"></div>
<div class="a" style="left:103px;top:187px;width:1100px;height:19px;background:#e9e9eb"></div>
<div class="a" style="left:104px;top:188px;width:23px;height:18px;background:#f5f5f7"></div>
<div class="a" style="left:276px;top:187px;width:77px;height:19px;background:#d0edf9"></div>
<div class="a" style="left:103px;top:206px;width:24px;height:120px;background:#e9e9eb"></div>
<div class="a" style="left:103px;top:346px;width:24px;height:18px;background:#d0edf9"></div>
<svg style="left:108px;top:194px" width="10" height="8" shape-rendering="crispEdges"><rect x="0" y="0" width="2" height="2" fill="#9a9a9c"/><rect x="0" y="3" width="2" height="2" fill="#9a9a9c"/><rect x="0" y="6" width="2" height="2" fill="#9a9a9c"/><rect x="4" y="0" width="2" height="2" fill="#9a9a9c"/><rect x="4" y="3" width="2" height="2" fill="#9a9a9c"/><rect x="4" y="6" width="2" height="2" fill="#9a9a9c"/><rect x="8" y="0" width="2" height="2" fill="#9a9a9c"/><rect x="8" y="3" width="2" height="2" fill="#9a9a9c"/><rect x="8" y="6" width="2" height="2" fill="#9a9a9c"/></svg>
<div class="hl" style="left:127px;top:206px;width:1271px"></div><div class="hl" style="left:127px;top:236px;width:1271px"></div><div class="hl" style="left:127px;top:263px;width:1271px"></div><div class="hl" style="left:127px;top:301px;width:1271px"></div><div class="hl" style="left:127px;top:326px;width:1271px"></div><div class="hl" style="left:127px;top:345px;width:1271px"></div><div class="hl" style="left:127px;top:364px;width:1271px"></div><div class="hl" style="left:127px;top:383px;width:1271px"></div><div class="hl" style="left:127px;top:421px;width:1271px"></div><div class="hl" style="left:127px;top:446px;width:1271px"></div><div class="hl" style="left:127px;top:465px;width:1271px"></div><div class="hl" style="left:127px;top:484px;width:1271px"></div><div class="hl" style="left:127px;top:503px;width:1271px"></div><div class="hl" style="left:127px;top:522px;width:1271px"></div><div class="hl" style="left:127px;top:541px;width:1271px"></div><div class="hl" style="left:127px;top:560px;width:1271px"></div><div class="hl" style="left:127px;top:599px;width:1271px"></div><div class="hl" style="left:127px;top:618px;width:1271px"></div><div class="hl" style="left:127px;top:637px;width:1271px"></div><div class="hl" style="left:127px;top:656px;width:1271px"></div><div class="hl" style="left:127px;top:675px;width:1271px"></div><div class="hl" style="left:127px;top:694px;width:1271px"></div><div class="hl" style="left:127px;top:713px;width:1271px"></div><div class="hl" style="left:127px;top:732px;width:1271px"></div><div class="hl" style="left:127px;top:751px;width:1271px"></div><div class="hl" style="left:127px;top:770px;width:1271px"></div><div class="hl" style="left:127px;top:789px;width:1271px"></div><div class="hl" style="left:127px;top:808px;width:1271px"></div><div class="vl" style="left:127px;top:207px;height:609px"></div><div class="vl" style="left:136px;top:207px;height:609px"></div><div class="vl" style="left:158px;top:207px;height:609px"></div><div class="vl" style="left:222px;top:207px;height:609px"></div><div class="vl" style="left:275px;top:207px;height:609px"></div><div class="vl" style="left:353px;top:207px;height:609px"></div><div class="vl" style="left:424px;top:207px;height:609px"></div><div class="vl" style="left:463px;top:207px;height:609px"></div><div class="vl" style="left:522px;top:207px;height:609px"></div><div class="vl" style="left:552px;top:207px;height:609px"></div><div class="vl" style="left:640px;top:207px;height:609px"></div><div class="vl" style="left:779px;top:207px;height:609px"></div><div class="vl" style="left:858px;top:207px;height:609px"></div><div class="vl" style="left:1053px;top:207px;height:609px"></div><div class="vl" style="left:1125px;top:207px;height:609px"></div><div class="vl" style="left:1197px;top:207px;height:609px"></div><div class="vl" style="left:1269px;top:207px;height:609px"></div><div class="vl" style="left:1341px;top:207px;height:609px"></div><div class="vl" style="left:136px;top:187px;height:19px;background:#dadadc"></div><div class="vl" style="left:158px;top:187px;height:19px;background:#dadadc"></div><div class="vl" style="left:222px;top:187px;height:19px;background:#dadadc"></div><div class="vl" style="left:275px;top:187px;height:19px;background:#dadadc"></div><div class="vl" style="left:353px;top:187px;height:19px;background:#dadadc"></div><div class="vl" style="left:424px;top:187px;height:19px;background:#dadadc"></div><div class="vl" style="left:463px;top:187px;height:19px;background:#dadadc"></div><div class="vl" style="left:522px;top:187px;height:19px;background:#dadadc"></div><div class="vl" style="left:552px;top:187px;height:19px;background:#dadadc"></div><div class="vl" style="left:640px;top:187px;height:19px;background:#dadadc"></div><div class="vl" style="left:779px;top:187px;height:19px;background:#dadadc"></div><div class="vl" style="left:858px;top:187px;height:19px;background:#dadadc"></div><div class="vl" style="left:1053px;top:187px;height:19px;background:#dadadc"></div><div class="vl" style="left:1125px;top:187px;height:19px;background:#dadadc"></div><div class="vl" style="left:1197px;top:187px;height:19px;background:#dadadc"></div><div class="vl" style="left:1269px;top:187px;height:19px;background:#dadadc"></div><div class="vl" style="left:1341px;top:187px;height:19px;background:#dadadc"></div><div class="hl" style="left:103px;top:206px;width:24px;background:#d6d8dc"></div><div class="hl" style="left:103px;top:236px;width:24px;background:#d6d8dc"></div><div class="hl" style="left:103px;top:263px;width:24px;background:#d6d8dc"></div><div class="hl" style="left:103px;top:301px;width:24px;background:#d6d8dc"></div><div class="hl" style="left:103px;top:326px;width:24px;background:#d6d8dc"></div><div class="hl" style="left:103px;top:345px;width:24px;background:#e0e3e8"></div><div class="hl" style="left:103px;top:364px;width:24px;background:#e0e3e8"></div><div class="hl" style="left:103px;top:383px;width:24px;background:#e0e3e8"></div><div class="hl" style="left:103px;top:421px;width:24px;background:#e0e3e8"></div><div class="hl" style="left:103px;top:446px;width:24px;background:#e0e3e8"></div><div class="hl" style="left:103px;top:465px;width:24px;background:#e0e3e8"></div><div class="hl" style="left:103px;top:484px;width:24px;background:#e0e3e8"></div><div class="hl" style="left:103px;top:503px;width:24px;background:#e0e3e8"></div><div class="hl" style="left:103px;top:522px;width:24px;background:#e0e3e8"></div><div class="hl" style="left:103px;top:541px;width:24px;background:#e0e3e8"></div><div class="hl" style="left:103px;top:560px;width:24px;background:#e0e3e8"></div><div class="hl" style="left:103px;top:599px;width:24px;background:#e0e3e8"></div><div class="hl" style="left:103px;top:618px;width:24px;background:#e0e3e8"></div><div class="hl" style="left:103px;top:637px;width:24px;background:#e0e3e8"></div><div class="hl" style="left:103px;top:656px;width:24px;background:#e0e3e8"></div><div class="hl" style="left:103px;top:675px;width:24px;background:#e0e3e8"></div><div class="hl" style="left:103px;top:694px;width:24px;background:#e0e3e8"></div><div class="hl" style="left:103px;top:713px;width:24px;background:#e0e3e8"></div><div class="hl" style="left:103px;top:732px;width:24px;background:#e0e3e8"></div><div class="hl" style="left:103px;top:751px;width:24px;background:#e0e3e8"></div><div class="hl" style="left:103px;top:770px;width:24px;background:#e0e3e8"></div><div class="hl" style="left:103px;top:789px;width:24px;background:#e0e3e8"></div><div class="hl" style="left:103px;top:808px;width:24px;background:#e0e3e8"></div>
<div class="ch" style="left:126px;width:11px">A</div>
<div class="ch" style="left:136px;width:23px">B</div>
<div class="ch" style="left:158px;width:65px">C</div>
<div class="ch" style="left:222px;width:54px">D</div>
<div class="ch" style="left:275px;width:79px">E</div>
<div class="ch" style="left:353px;width:72px">F</div>
<div class="ch" style="left:424px;width:40px">G</div>
<div class="ch" style="left:463px;width:60px">H</div>
<div class="ch" style="left:522px;width:31px">I</div>
<div class="ch" style="left:552px;width:89px">J</div>
<div class="ch" style="left:640px;width:140px">K</div>
<div class="ch" style="left:779px;width:80px">L</div>
<div class="ch" style="left:858px;width:196px">M</div>
<div class="ch" style="left:1053px;width:73px">N</div>
<div class="ch" style="left:1125px;width:73px">O</div>
<div class="ch" style="left:1197px;width:73px">P</div>
<div class="ch" style="left:1269px;width:73px">R</div>
<div class="ch" style="left:1341px;width:73px">S</div>
<div class="rh" style="top:206.7px;height:30px;line-height:30px">1(H)</div>
<div class="rh" style="top:236.5px;height:27px;line-height:27px">3(H)</div>
<div class="rh" style="top:264.2px;height:38px;line-height:38px">4</div>
<div class="rh" style="top:301.4px;height:25px;line-height:25px">5</div>
<div class="rh" style="top:326.0px;height:19px;line-height:19px">6</div>
<div class="rh" style="top:345.0px;height:19px;line-height:19px">7</div>
<div class="rh" style="top:364.0px;height:19px;line-height:19px">8</div>
<div class="rh" style="top:384.2px;height:38px;line-height:38px">9</div>
<div class="rh" style="top:421.4px;height:25px;line-height:25px">10</div>
<div class="rh" style="top:446.0px;height:19px;line-height:19px">11</div>
<div class="rh" style="top:465.0px;height:19px;line-height:19px">12</div>
<div class="rh" style="top:484.0px;height:19px;line-height:19px">13</div>
<div class="rh" style="top:503.0px;height:19px;line-height:19px">14</div>
<div class="rh" style="top:522.0px;height:19px;line-height:19px">15</div>
<div class="rh" style="top:541.0px;height:19px;line-height:19px">16</div>
<div class="rh" style="top:561.2px;height:39px;line-height:39px">17</div>
<div class="rh" style="top:599.0px;height:19px;line-height:19px">18</div>
<div class="rh" style="top:618.0px;height:19px;line-height:19px">19</div>
<div class="rh" style="top:637.0px;height:19px;line-height:19px">20</div>
<div class="rh" style="top:656.0px;height:19px;line-height:19px">21</div>
<div class="rh" style="top:675.0px;height:19px;line-height:19px">22</div>
<div class="rh" style="top:694.0px;height:19px;line-height:19px">23</div>
<div class="rh" style="top:713.0px;height:19px;line-height:19px">24</div>
<div class="rh" style="top:732.0px;height:19px;line-height:19px">25</div>
<div class="rh" style="top:751.0px;height:19px;line-height:19px">26</div>
<div class="rh" style="top:770.0px;height:19px;line-height:19px">27</div>
<div class="rh" style="top:789.0px;height:19px;line-height:19px">28</div>
<div class="rh" style="top:808.0px;height:19px;line-height:19px">29</div>
<div class="a" style="left:137px;top:207px;width:85px;height:29px;background:#fff"></div>
<div class="a" style="left:223px;top:207px;width:299px;height:29px;background:#fff"></div>
<div class="a" style="left:137px;top:237px;width:385px;height:26px;background:#fff"></div>
<div class="a" style="left:223px;top:264px;width:130px;height:37px;background:#fff"></div>
<div class="a" style="left:223px;top:302px;width:130px;height:24px;background:#fff"></div>
<div class="cell" style="left:137px;top:207px;width:86px;height:29px;text-align:left"><span class="a" style="left:10px;top:0.5px;font-family:'Liberation Serif','Noto Serif CJK SC',serif;font-size:26px;line-height:32px;letter-spacing:2.6px;white-space:nowrap">logo.</span></div>
<svg style="left:0;top:0" width="400" height="244" viewBox="0 0 400 244" shape-rendering="crispEdges"><rect x="232" y="212" width="4" height="4" fill="#f3ebe3"/><rect x="236" y="212" width="4" height="4" fill="#e8e4e4"/><rect x="240" y="212" width="4" height="4" fill="#d8c8b8"/><rect x="244" y="212" width="4" height="4" fill="#a8b8d0"/><rect x="248" y="212" width="4" height="4" fill="#f8f8f8"/><rect x="232" y="216" width="4" height="4" fill="#7880a0"/><rect x="236" y="216" width="4" height="4" fill="#c0a898"/><rect x="240" y="216" width="4" height="4" fill="#6878a0"/><rect x="244" y="216" width="4" height="4" fill="#e0e0d0"/><rect x="248" y="216" width="4" height="4" fill="#787090"/><rect x="232" y="220" width="4" height="4" fill="#707078"/><rect x="236" y="220" width="4" height="4" fill="#c8b0a0"/><rect x="240" y="220" width="4" height="4" fill="#6078a0"/><rect x="244" y="220" width="4" height="4" fill="#e8e8d8"/><rect x="248" y="220" width="4" height="4" fill="#706888"/><rect x="232" y="224" width="4" height="4" fill="#686068"/><rect x="236" y="224" width="4" height="4" fill="#c0a898"/><rect x="240" y="224" width="4" height="4" fill="#6888b0"/><rect x="244" y="224" width="4" height="4" fill="#fffff0"/><rect x="248" y="224" width="4" height="4" fill="#787090"/><rect x="232" y="228" width="4" height="5" fill="#504848"/><rect x="236" y="228" width="4" height="5" fill="#b8a898"/><rect x="240" y="228" width="4" height="5" fill="#6080a8"/><rect x="244" y="228" width="4" height="5" fill="#e0e0c8"/><rect x="248" y="228" width="4" height="5" fill="#787090"/><rect x="268" y="212" width="4" height="4" fill="#f0e8e8"/><rect x="272" y="212" width="4" height="4" fill="#988878"/><rect x="276" y="212" width="4" height="4" fill="#a8b8c0"/><rect x="280" y="212" width="4" height="4" fill="#807880"/><rect x="284" y="212" width="4" height="4" fill="#c0c0c8"/><rect x="268" y="216" width="4" height="4" fill="#e8dcd8"/><rect x="272" y="216" width="4" height="4" fill="#c0b0a0"/><rect x="276" y="216" width="4" height="4" fill="#484450"/><rect x="280" y="216" width="4" height="4" fill="#8898a8"/><rect x="284" y="216" width="4" height="4" fill="#a8a8c0"/><rect x="268" y="220" width="4" height="4" fill="#c0a898"/><rect x="272" y="220" width="4" height="4" fill="#8090a8"/><rect x="276" y="220" width="4" height="4" fill="#b8b8b8"/><rect x="280" y="220" width="4" height="4" fill="#a09888"/><rect x="284" y="220" width="4" height="4" fill="#6878a0"/><rect x="268" y="224" width="4" height="4" fill="#b0a8a8"/><rect x="272" y="224" width="4" height="4" fill="#98a0b0"/><rect x="276" y="224" width="4" height="4" fill="#b0b0b0"/><rect x="280" y="224" width="4" height="4" fill="#585858"/><rect x="284" y="224" width="4" height="4" fill="#707080"/><rect x="288" y="224" width="4" height="4" fill="#dce4f0"/><rect x="272" y="228" width="4" height="5" fill="#808080"/><rect x="276" y="228" width="4" height="5" fill="#f0f0f0"/><rect x="280" y="228" width="4" height="5" fill="#686870"/><rect x="308" y="212" width="4" height="4" fill="#d0b8a8"/><rect x="312" y="212" width="4" height="4" fill="#c0d0d8"/><rect x="316" y="212" width="4" height="4" fill="#e0e0e0"/><rect x="320" y="212" width="4" height="4" fill="#e0d8d8"/><rect x="324" y="212" width="4" height="4" fill="#d8e0e8"/><rect x="304" y="216" width="4" height="4" fill="#fce8d8"/><rect x="308" y="216" width="4" height="4" fill="#8090a8"/><rect x="312" y="216" width="4" height="4" fill="#d0d8e0"/><rect x="320" y="216" width="4" height="4" fill="#e8d0b8"/><rect x="324" y="216" width="4" height="4" fill="#90a0b8"/><rect x="304" y="220" width="4" height="4" fill="#fce8d8"/><rect x="308" y="220" width="4" height="4" fill="#6880a0"/><rect x="320" y="220" width="4" height="4" fill="#e8d0b8"/><rect x="324" y="220" width="4" height="4" fill="#8098b8"/><rect x="304" y="224" width="4" height="4" fill="#fce8d8"/><rect x="308" y="224" width="4" height="4" fill="#6880a0"/><rect x="320" y="224" width="4" height="4" fill="#e8d0b8"/><rect x="324" y="224" width="4" height="4" fill="#8098b8"/><rect x="304" y="228" width="4" height="5" fill="#fdf0e8"/><rect x="308" y="228" width="4" height="5" fill="#7088a8"/><rect x="316" y="228" width="4" height="5" fill="#f8f0e8"/><rect x="320" y="228" width="4" height="5" fill="#d0b8a0"/><rect x="324" y="228" width="4" height="5" fill="#90a0b8"/><rect x="344" y="212" width="4" height="4" fill="#e8e8e8"/><rect x="348" y="212" width="4" height="4" fill="#e0e0e0"/><rect x="352" y="212" width="4" height="4" fill="#887868"/><rect x="356" y="212" width="4" height="4" fill="#f0f0f0"/><rect x="360" y="212" width="4" height="4" fill="#d8d8d8"/><rect x="344" y="216" width="4" height="4" fill="#787878"/><rect x="348" y="216" width="4" height="4" fill="#a8a8a8"/><rect x="352" y="216" width="4" height="4" fill="#a0a0b0"/><rect x="356" y="216" width="4" height="4" fill="#c8c8c8"/><rect x="360" y="216" width="4" height="4" fill="#686870"/><rect x="364" y="216" width="4" height="4" fill="#eef3f9"/><rect x="344" y="220" width="4" height="4" fill="#f0d8c0"/><rect x="348" y="220" width="4" height="4" fill="#98a8b8"/><rect x="352" y="220" width="4" height="4" fill="#808890"/><rect x="356" y="220" width="4" height="4" fill="#d8d8c8"/><rect x="360" y="220" width="4" height="4" fill="#8888a0"/><rect x="344" y="224" width="4" height="4" fill="#f0d8c0"/><rect x="348" y="224" width="4" height="4" fill="#8090a0"/><rect x="352" y="224" width="4" height="4" fill="#889090"/><rect x="356" y="224" width="4" height="4" fill="#585858"/><rect x="360" y="224" width="4" height="4" fill="#706880"/><rect x="344" y="228" width="4" height="5" fill="#e8d0b8"/><rect x="348" y="228" width="4" height="5" fill="#7890a0"/><rect x="352" y="228" width="4" height="5" fill="#a89088"/><rect x="356" y="228" width="4" height="5" fill="#90a098"/><rect x="360" y="228" width="4" height="5" fill="#787088"/><rect x="352" y="211" width="5" height="1" fill="#222"/><rect x="360" y="214" width="4" height="1" fill="#222"/><rect x="232" y="228" width="2" height="5" fill="#111"/></svg>
<div class="cell" style="left:370px;top:207px;width:160px;height:29px;text-align:left"><span class="a" style="left:10.5px;top:-1px;font-family:'Liberation Serif','Noto Serif CJK SC',serif;font-size:24px;line-height:32px;letter-spacing:14px;white-space:nowrap">有限公司</span></div>
<div class="a" style="left:296px;top:237px;width:72px;height:2px;background:linear-gradient(90deg,#fff,#d4d4d4 30%,#c9c9c9 70%,#fff)"></div>
<div class="a" style="left:340px;top:239px;width:26px;height:1px;background:#d0d0d0"></div>
<svg style="left:216px;top:207px" width="6" height="6"><path d="M0 0H6V6Z" fill="#b400ff"/></svg>
<svg style="left:354px;top:320px" width="6" height="6"><path d="M0 0V6H6Z" fill="#ffc000"/></svg>
<div class="cell" style="left:140px;top:237px;width:130px;height:26px;font-weight:700;font-size:12.5px;letter-spacing:1.5px;line-height:25px;text-align:left;white-space:nowrap;font-family:'Liberation Sans','Noto Sans CJK SC',sans-serif">作业人员<span style="font-family:'Liberation Mono',monospace;font-weight:bold;font-size:13px;letter-spacing:0;margin-left:0.5px;position:relative;top:-0.5px">:</span></div>
<div class="cell" style="left:279px;top:237px;width:140px;height:26px;font-weight:700;font-size:12.5px;letter-spacing:1.5px;line-height:25px;text-align:left;white-space:nowrap;font-family:'Liberation Sans','Noto Sans CJK SC',sans-serif">标准产能<span style="font-family:'Liberation Mono',monospace;font-weight:bold;font-size:13px;letter-spacing:0;margin-left:0.5px;position:relative;top:-0.5px">:</span></div>
<div class="cell" style="left:428px;top:237px;width:90px;height:26px;font-weight:700;font-size:12.5px;letter-spacing:1.5px;line-height:25px;text-align:left;white-space:nowrap;font-family:'Liberation Sans','Noto Sans CJK SC',sans-serif">计划产能<span style="font-family:'Liberation Mono',monospace;font-weight:bold;font-size:13px;letter-spacing:0;margin-left:0.5px;position:relative;top:-0.5px">:</span></div>
<div class="cell" style="left:138px;top:264px;width:22px;height:37px;font-size:12.6px;font-weight:500;letter-spacing:0.6px;font-family:'Liberation Serif','Noto Serif CJK SC',serif;line-height:16px;padding-top:3px">序<br>号</div>
<div class="cell" style="left:160px;top:264px;width:64px;height:37px;font-size:12.6px;font-weight:500;letter-spacing:0.6px;font-family:'Liberation Serif','Noto Serif CJK SC',serif;line-height:38px">单号</div>
<div class="cell" style="left:224px;top:264px;width:131px;height:37px;font-size:12.6px;font-weight:500;letter-spacing:0.6px;font-family:'Liberation Serif','Noto Serif CJK SC',serif;line-height:38px">产品</div>
<div class="cell" style="left:355px;top:264px;width:71px;height:37px;font-size:12.6px;font-weight:500;letter-spacing:0.6px;font-family:'Liberation Serif','Noto Serif CJK SC',serif;line-height:38px">颜色</div>
<div class="cell" style="left:426px;top:264px;width:39px;height:37px;font-size:12.6px;font-weight:500;letter-spacing:0.6px;font-family:'Liberation Serif','Noto Serif CJK SC',serif;line-height:16px;padding-top:3px">是否<br>完成</div>
<div class="cell" style="left:465px;top:264px;width:59px;height:37px;font-size:12.6px;font-weight:500;letter-spacing:0.6px;font-family:'Liberation Serif','Noto Serif CJK SC',serif;line-height:38px">备注</div>
<div class="cell" style="left:138px;top:302px;width:21px;height:24px;font-size:12.6px;font-weight:400;line-height:16px;padding-top:1px;white-space:nowrap;font-family:'Liberation Serif','Noto Serif CJK SC',serif;">=<br>se</div>
<div class="cell" style="left:160px;top:302px;width:63px;height:24px;font-size:12.6px;font-weight:400;line-height:16px;padding-top:1px;white-space:nowrap;font-family:'Liberation Serif','Noto Serif CJK SC',serif;letter-spacing:1.75px">orders.<br>G(danhao</div>
<div class="cell" style="left:224px;top:302px;width:131px;height:24px;font-size:12.6px;font-weight:400;line-height:16px;padding-top:1px;white-space:nowrap;font-family:'Liberation Serif','Noto Serif CJK SC',serif;letter-spacing:1.68px">orders.G(product_<br>name)</div>
<div class="cell" style="left:355px;top:302px;width:70px;height:24px;font-size:12.6px;font-weight:400;line-height:16px;padding-top:1px;white-space:nowrap;font-family:'Liberation Serif','Noto Serif CJK SC',serif;letter-spacing:1.6px">order_<br>attr.G(</div>
<svg style="left:137px;top:207px" width="5" height="6"><path d="M2.5 0V4.6M0.4 2.4L2.5 4.8L4.6 2.4" fill="none" stroke="#8c8c8c" stroke-width="1"/></svg>
<svg style="left:160px;top:303px" width="5" height="6"><path d="M2.5 0V4.6M0.4 2.4L2.5 4.8L4.6 2.4" fill="none" stroke="#8c8c8c" stroke-width="1"/></svg>
<svg style="left:224px;top:303px" width="5" height="6"><path d="M2.5 0V4.6M0.4 2.4L2.5 4.8L4.6 2.4" fill="none" stroke="#8c8c8c" stroke-width="1"/></svg>
<svg style="left:355px;top:303px" width="5" height="6"><path d="M2.5 0V4.6M0.4 2.4L2.5 4.8L4.6 2.4" fill="none" stroke="#8c8c8c" stroke-width="1"/></svg>
<svg style="left:426px;top:303px" width="5" height="6"><path d="M2.5 0V4.6M0.4 2.4L2.5 4.8L4.6 2.4" fill="none" stroke="#8c8c8c" stroke-width="1"/></svg>
<svg style="left:465px;top:303px" width="5" height="6"><path d="M2.5 0V4.6M0.4 2.4L2.5 4.8L4.6 2.4" fill="none" stroke="#8c8c8c" stroke-width="1"/></svg>
<div class="bl" style="left:136px;top:236px;width:387px;height:1px"></div>
<div class="bl" style="left:136px;top:263px;width:387px;height:1px"></div>
<div class="bl" style="left:136px;top:301px;width:387px;height:1px"></div>
<div class="bl" style="left:136px;top:326px;width:387px;height:1px"></div>
<div class="bl" style="left:136px;top:236px;width:1px;height:91px"></div>
<div class="bl" style="left:522px;top:236px;width:1px;height:91px"></div>
<div class="bl" style="left:275px;top:236px;width:1px;height:28px"></div>
<div class="bl" style="left:424px;top:236px;width:1px;height:91px"></div>
<div class="bl" style="left:158px;top:263px;width:1px;height:64px"></div>
<div class="bl" style="left:222px;top:263px;width:1px;height:64px"></div>
<div class="bl" style="left:353px;top:263px;width:1px;height:64px"></div>
<div class="bl" style="left:463px;top:263px;width:1px;height:64px"></div>
<div class="a" style="left:274px;top:344px;width:81px;height:22px;border:3px solid #2f7fe6"></div>
<div class="a" style="left:350px;top:361px;width:7px;height:7px;background:#fff"></div>
<div class="a" style="left:351px;top:362px;width:5px;height:5px;background:#2f7fe6"></div>
<div class="a" style="left:125px;top:233px;width:432px;height:35px;border:2px solid #e60008"></div>
<svg style="left:0;top:0" width="600" height="560" viewBox="0 0 600 560"><path d="M535.3 271L550 300.5H538L531.6 537H527.4L532.8 300.5H520.3Z" fill="#e60008"/></svg>
<svg style="left:897px;top:207px" width="1" height="609"><line x1="0.5" y1="0" x2="0.5" y2="609" stroke="#000" stroke-width="1" stroke-dasharray="9 2 2 2"/></svg>
<div class="a" style="left:647px;top:150px;width:656px;height:598px;background:#f5f5f7;border:1px solid #1883d7;box-shadow:0 3px 18px 0 rgba(0,0,0,0.33)"></div>
<div class="a" style="left:648px;top:151px;width:654px;height:25px;background:#fff"></div>
<div class="a ui" style="left:651px;top:151px;height:25px;line-height:25px;font-size:12px;color:#000">报表分栏</div>
<svg style="left:1282px;top:158px" width="11" height="11"><path d="M0.5 0.5L10.5 10.5M10.5 0.5L0.5 10.5" stroke="#111" stroke-width="1.1" fill="none"/></svg>
<div class="a" style="left:675px;top:189px;width:600px;height:42px;border:1px solid #cfcfd1;border-radius:6px"></div>
<div class="a ui" style="left:675px;top:199px;font-size:14px;line-height:20px;color:#111">分栏</div>
<div class="a" style="left:1129px;top:201px;width:122px;height:22px;background:#fff;border:1px solid #e2e2e4"></div>
<div class="a ui" style="left:1130px;top:202px;width:60px;height:20px;background:#419bf9;color:#fff;text-align:center;line-height:22px;font-size:12px">开启</div>
<div class="a ui" style="left:1190px;top:202px;width:60px;height:20px;color:#111;text-align:center;line-height:22px;font-size:12px">关闭</div>
<div class="a" style="left:675px;top:244px;width:600px;height:202px;border:1px solid #e8e8ea;border-radius:6px"></div>
<div class="a ui" style="left:679px;top:235px;padding:0 2px;background:#f5f5f7;font-size:12px;line-height:20px;color:#1a9bdc">分栏样式</div>
<div class="a" style="left:727px;top:269px;width:171px;height:95px;background:#fff"></div>
<div class="a" style="left:727px;top:269px;width:171px;height:1px;background:#d0d0d2"></div>
<div class="a" style="left:727px;top:288px;width:171px;height:1px;background:#d0d0d2"></div>
<div class="a" style="left:727px;top:307px;width:171px;height:1px;background:#d0d0d2"></div>
<div class="a" style="left:727px;top:326px;width:171px;height:1px;background:#d0d0d2"></div>
<div class="a" style="left:727px;top:345px;width:171px;height:1px;background:#d0d0d2"></div>
<div class="a" style="left:727px;top:269px;width:1px;height:95px;background:#d0d0d2"></div>
<div class="a" style="left:808px;top:269px;width:1px;height:95px;background:#d0d0d2"></div>
<div class="a" style="left:897px;top:269px;width:1px;height:95px;background:#d0d0d2"></div>
<div class="a ui" style="left:731px;top:270px;width:81px;height:18px;line-height:23px;text-align:center;font-size:12px;color:#111">标题</div>
<div class="a ui" style="left:809px;top:270px;width:88px;height:18px;line-height:23px;text-align:center;font-size:12px;color:#111">标题</div>
<div class="a ipa" style="left:731px;top:289px;width:81px;height:18px;line-height:20px;text-align:center;font-size:11.5px;color:#111">1</div>
<div class="a ipa" style="left:809px;top:289px;width:88px;height:18px;line-height:20px;text-align:center;font-size:11.5px;color:#111">5</div>
<div class="a ipa" style="left:731px;top:308px;width:81px;height:18px;line-height:20px;text-align:center;font-size:11.5px;color:#111">2</div>
<div class="a ipa" style="left:809px;top:308px;width:88px;height:18px;line-height:20px;text-align:center;font-size:11.5px;color:#111">6</div>
<div class="a ipa" style="left:731px;top:327px;width:81px;height:18px;line-height:20px;text-align:center;font-size:11.5px;color:#111">3</div>
<div class="a ipa" style="left:809px;top:327px;width:88px;height:18px;line-height:20px;text-align:center;font-size:11.5px;color:#111">7</div>
<div class="a ipa" style="left:731px;top:346px;width:81px;height:18px;line-height:20px;text-align:center;font-size:11.5px;color:#111">4</div>
<div class="a ipa" style="left:809px;top:346px;width:88px;height:18px;line-height:20px;text-align:center;font-size:11.5px;color:#111">8</div>
<div class="a" style="left:991px;top:269px;width:171px;height:95px;background:#fff"></div>
<div class="a" style="left:991px;top:269px;width:171px;height:1px;background:#c8c8ca"></div>
<div class="a" style="left:991px;top:300px;width:171px;height:1px;background:#c8c8ca"></div>
<div class="a" style="left:991px;top:332px;width:171px;height:1px;background:#c8c8ca"></div>
<div class="a" style="left:991px;top:363px;width:171px;height:1px;background:#c8c8ca"></div>
<div class="a" style="left:991px;top:269px;width:1px;height:95px;background:#c8c8ca"></div>
<div class="a" style="left:1048px;top:269px;width:1px;height:95px;background:#c8c8ca"></div>
<div class="a" style="left:1104px;top:269px;width:1px;height:95px;background:#c8c8ca"></div>
<div class="a" style="left:1161px;top:269px;width:1px;height:95px;background:#c8c8ca"></div>
<div class="a ui" style="left:992px;top:270px;width:56px;height:31px;line-height:34px;text-align:center;font-size:12px;color:#111">标题</div>
<div class="a ipa" style="left:1049px;top:270px;width:55px;height:31px;line-height:33px;text-align:center;font-size:12px;color:#111">1</div>
<div class="a ipa" style="left:1105px;top:270px;width:56px;height:31px;line-height:33px;text-align:center;font-size:12px;color:#111">2</div>
<div class="a ui" style="left:992px;top:301px;width:56px;height:32px;line-height:35px;text-align:center;font-size:12px;color:#111">标题</div>
<div class="a ipa" style="left:1049px;top:301px;width:55px;height:32px;line-height:34px;text-align:center;font-size:12px;color:#111">3</div>
<div class="a ipa" style="left:1105px;top:301px;width:56px;height:32px;line-height:34px;text-align:center;font-size:12px;color:#111">4</div>
<div class="a ui" style="left:992px;top:333px;width:56px;height:30px;line-height:33px;text-align:center;font-size:12px;color:#111">标题</div>
<div class="a ipa" style="left:1049px;top:333px;width:55px;height:30px;line-height:32px;text-align:center;font-size:12px;color:#111">5</div>
<div class="a ipa" style="left:1105px;top:333px;width:56px;height:30px;line-height:32px;text-align:center;font-size:12px;color:#111">6</div>
<svg width="0" height="0" style="left:0;top:0"><defs><linearGradient id="rg" x1="0" y1="0" x2="0" y2="1"><stop offset="0" stop-color="#ffffff"/><stop offset="0.55" stop-color="#f6f6f6"/><stop offset="1" stop-color="#dcdcdc"/></linearGradient></defs></svg>
<svg style="left:786px;top:373px" width="14" height="14" viewBox="0 0 14 14"><circle cx="7" cy="7" r="5.9" fill="url(#rg)" stroke="#a9a9ab" stroke-width="1"/><circle cx="7" cy="7" r="2.6" fill="#3b8cf5"/></svg>
<div class="a ui" style="left:803px;top:371px;height:20px;line-height:20px;font-size:12px;color:#111;white-space:nowrap;">行分栏</div>
<svg style="left:1048px;top:373px" width="14" height="14" viewBox="0 0 14 14"><circle cx="7" cy="7" r="5.9" fill="url(#rg)" stroke="#a9a9ab" stroke-width="1"/></svg>
<div class="a ui" style="left:1065px;top:371px;height:20px;line-height:20px;font-size:12px;color:#111;white-space:nowrap;">列分栏</div>
<div class="a" style="left:699px;top:399px;width:173px;height:37px;border:2px solid #e3001b"></div>
<svg style="left:716px;top:408px" width="14" height="14" viewBox="0 0 14 14"><circle cx="7" cy="7" r="5.9" fill="url(#rg)" stroke="#a9a9ab" stroke-width="1"/><circle cx="7" cy="7" r="2.6" fill="#3b8cf5"/></svg>
<div class="a ui" style="left:734px;top:406px;height:20px;line-height:20px;font-size:12px;color:#111;white-space:nowrap;">超过</div>
<div class="a" style="left:762px;top:405px;width:41px;height:19px;background:#fff;border:1px solid #d2d2d4"></div>
<div class="a ns" style="left:765px;top:405px;height:19px;line-height:17px;font-size:12px;color:#111;letter-spacing:0.4px">20</div>
<div class="a" style="left:803px;top:405px;width:13px;height:19px;border:1px solid #e3e3e5;border-left:none"></div>
<svg style="left:805px;top:407px" width="9" height="15" viewBox="0 0 9 15"><path d="M0.5 5L4.5 1L8.5 5M0.5 10L4.5 14L8.5 10" fill="none" stroke="#555" stroke-width="1"/></svg>
<div class="a ui" style="left:816px;top:406px;height:20px;line-height:20px;font-size:12px;color:#111;white-space:nowrap;">行分栏</div>
<svg style="left:880px;top:408px" width="14" height="14" viewBox="0 0 14 14"><circle cx="7" cy="7" r="5.9" fill="url(#rg)" stroke="#a9a9ab" stroke-width="1"/></svg>
<div class="a ui" style="left:898px;top:406px;height:20px;line-height:20px;font-size:12px;color:#111;white-space:nowrap;">分栏成</div>
<div class="a" style="left:938px;top:405px;width:41px;height:19px;background:#f5f5f7;border:1px solid #cfcac2"></div>
<div class="a ns" style="left:941px;top:405px;height:19px;line-height:17px;font-size:12px;color:#b4b4b4;letter-spacing:0.4px">0</div>
<div class="a" style="left:979px;top:405px;width:13px;height:19px;border:1px solid #e3e3e5;border-left:none"></div>
<svg style="left:981px;top:407px" width="9" height="15" viewBox="0 0 9 15"><path d="M0.5 5L4.5 1L8.5 5M0.5 10L4.5 14L8.5 10" fill="none" stroke="#555" stroke-width="1"/></svg>
<div class="a ui" style="left:991px;top:406px;height:20px;line-height:20px;font-size:12px;color:#111;white-space:nowrap;">列</div>
<div class="a" style="left:675px;top:460px;width:600px;height:66px;border:1px solid #e8e8ea;border-radius:6px"></div>
<div class="a ui" style="left:679px;top:451px;padding:0 2px;background:#f5f5f7;font-size:12px;line-height:20px;color:#1a9bdc">分栏区域</div>
<div class="a ui" style="left:683px;top:485px;height:20px;line-height:20px;font-size:12px;color:#111;white-space:nowrap;">分栏数据:</div>
<div class="a" style="left:742px;top:483px;width:107px;height:24px;background:#fff;border:1px solid #d9d9db"></div>
<div class="a ui" style="left:746px;top:486px;height:20px;line-height:20px;font-size:12px;color:#111;white-space:nowrap;">B5:H5</div>
<div class="a ui" style="left:854px;top:485px;height:20px;line-height:20px;font-size:12px;color:#111;white-space:nowrap;">格式:</div>
<div class="a ns" style="left:889px;top:485px;height:20px;line-height:20px;font-size:12px;color:#111;white-space:nowrap;letter-spacing:-0.3px">A2:D5</div>
<div class="a ui" style="left:931px;top:485px;height:20px;line-height:20px;font-size:12px;color:#111;white-space:nowrap;">复制行序列:</div>
<div class="a" style="left:1002px;top:483px;width:107px;height:24px;background:#fff;border:1px solid #d9d9db"></div>
<div class="a ui" style="left:1006px;top:486px;height:20px;line-height:20px;font-size:12px;color:#111;white-space:nowrap;">4</div>
<div class="a ui" style="left:1114px;top:485px;height:20px;line-height:20px;font-size:12px;color:#111;white-space:nowrap;">格式:</div>
<div class="a ns" style="left:1150px;top:485px;height:20px;line-height:20px;font-size:12px;color:#111;white-space:nowrap;letter-spacing:1.35px">1,2-3,5,18</div>
<svg style="left:1196px;top:538px" width="13" height="13" viewBox="0 0 13 13"><rect x="0" y="0" width="13" height="13" fill="#3e96f7"/><path d="M2.5 6.5L5.3 9.5L10.5 3.2" fill="none" stroke="#fff" stroke-width="1.6"/></svg>
<div class="a ui" style="left:1213px;top:535px;height:20px;line-height:20px;font-size:12px;color:#111;white-space:nowrap;">补充空白行</div>
<div class="a ui" style="left:1190px;top:723px;width:44px;height:20px;background:#fff;border:1px solid #e0e0e2;text-align:center;line-height:19px;font-size:12px;color:#111">确定</div>
<div class="a ui" style="left:1244px;top:723px;width:44px;height:20px;background:#fff;border:1px solid #e0e0e2;text-align:center;line-height:19px;font-size:12px;color:#111">取消</div>
</body></html>
